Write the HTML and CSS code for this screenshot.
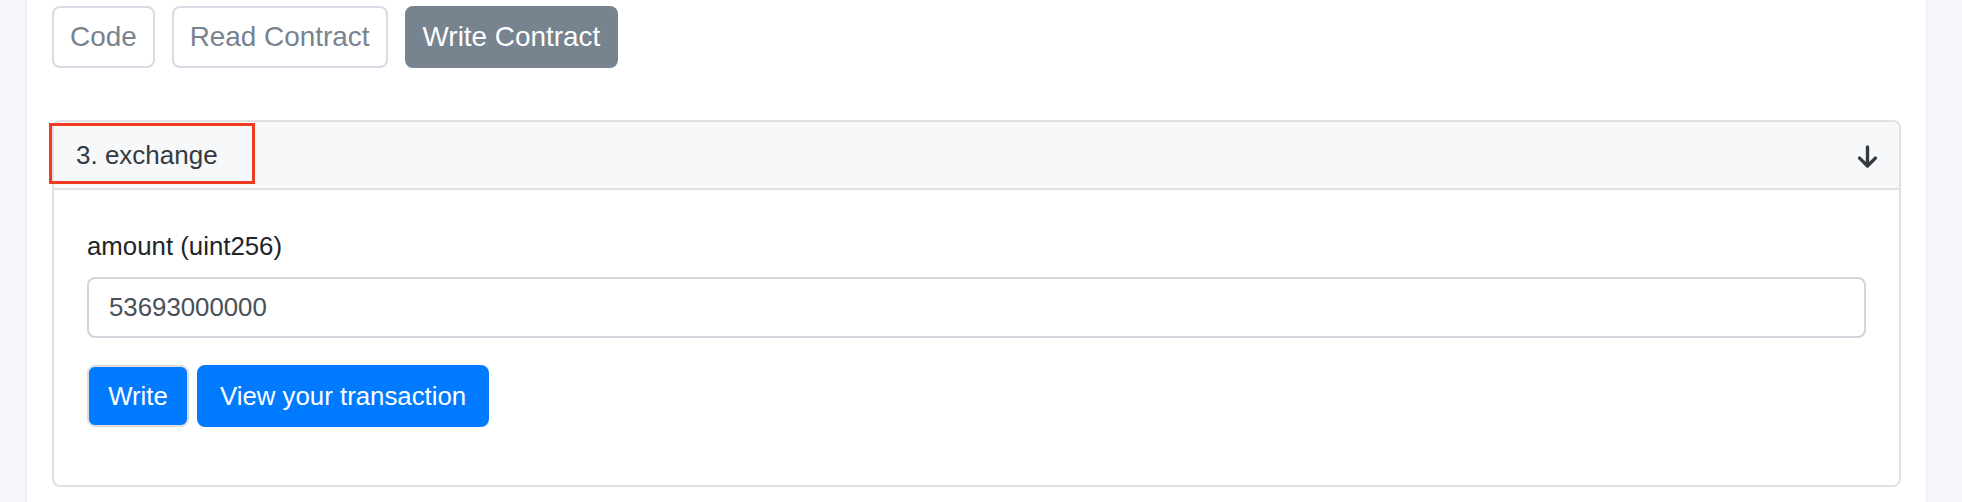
FILE: index.html
```html
<!DOCTYPE html>
<html>
<head>
<meta charset="utf-8">
<link rel="stylesheet" href="styles.css">
</head>
<body>
<div class="panel">
  <div class="tabs">
    <button class="tab">Code</button>
    <button class="tab">Read Contract</button>
    <button class="tab active">Write Contract</button>
  </div>
  <div class="card">
    <div class="card-header">
      <span class="title">3. exchange</span>
      <svg class="arrow" width="21" height="23" viewBox="0 0 21 23"><path d="M10.5 2V21M2.6 13.1L10.5 21l7.9-7.9" fill="none" stroke="#343a40" stroke-width="3.4" stroke-linecap="round" stroke-linejoin="round"/></svg>
    </div>
    <div class="highlight"></div>
    <div class="card-body">
      <label class="field-label">amount (uint256)</label>
      <input class="field-input" type="text" value="53693000000">
      <div class="actions">
        <button class="btn btn-write">Write</button>
        <button class="btn btn-view">View your transaction</button>
      </div>
    </div>
  </div>
</div>
</body>
</html>
```
FILE: styles.css
```css
html, body {
  margin: 0;
  padding: 0;
}
body {
  background: #f5f6fa;
  font-family: "Liberation Sans", Arial, Helvetica, sans-serif;
  height: 502px;
  overflow: hidden;
}
.panel {
  box-sizing: border-box;
  margin-left: 26px;
  width: 1901px;
  height: 502px;
  background: #ffffff;
  border-left: 1px solid #e8ebf2;
  border-right: 1px solid #e8ebf2;
  padding: 6px 25px 0 25px;
}
.tabs {
  display: flex;
  gap: 17px;
}
.tab {
  box-sizing: border-box;
  height: 62px;
  padding: 0 16px;
  border: 2px solid #d7dce4;
  border-radius: 8px;
  background: #ffffff;
  color: #77838f;
  font-family: "Liberation Sans", Arial, Helvetica, sans-serif;
  font-size: 27.9px;
}
.tab.active {
  background: #77838f;
  border-color: #77838f;
  color: #ffffff;
}
.card {
  position: relative;
  margin-top: 52px;
  border: 2px solid #e1e1e1;
  border-radius: 8px;
}
.card-header {
  display: flex;
  align-items: center;
  justify-content: space-between;
  height: 66px;
  padding: 0 21px 0 22px;
  background: #f7f8fa;
  border-bottom: 2px solid #e1e1e1;
  border-radius: 7px 7px 0 0;
}
.title {
  font-size: 26px;
  color: #343a40;
}
.arrow {
  display: block;
  margin-top: 2px;
}
.highlight {
  position: absolute;
  left: -5px;
  top: 1px;
  width: 206px;
  height: 61px;
  box-sizing: border-box;
  border: 3px solid #ef3b22;
}
.card-body {
  padding: 37px 33px 58px 33px;
  display: flex;
  flex-direction: column;
}
.field-label {
  font-size: 25.8px;
  line-height: 38px;
  color: #212529;
}
.field-input {
  box-sizing: border-box;
  margin-top: 12px;
  height: 61px;
  width: 100%;
  padding: 0 20px;
  border: 2px solid #d2d6dc;
  border-radius: 8px;
  font-family: "Liberation Sans", Arial, Helvetica, sans-serif;
  font-size: 25.8px;
  color: #495057;
  outline: none;
}
.actions {
  display: flex;
  gap: 8px;
  margin-top: 27px;
}
.btn {
  box-sizing: border-box;
  height: 62px;
  border-radius: 8px;
  background: #007bff;
  color: #ffffff;
  font-family: "Liberation Sans", Arial, Helvetica, sans-serif;
  font-size: 25.8px;
  border: 2px solid #007bff;
}
.btn-write {
  width: 102px;
  padding: 0;
  border-color: #dedede;
}
.btn-view {
  padding: 0 21px;
}
```
